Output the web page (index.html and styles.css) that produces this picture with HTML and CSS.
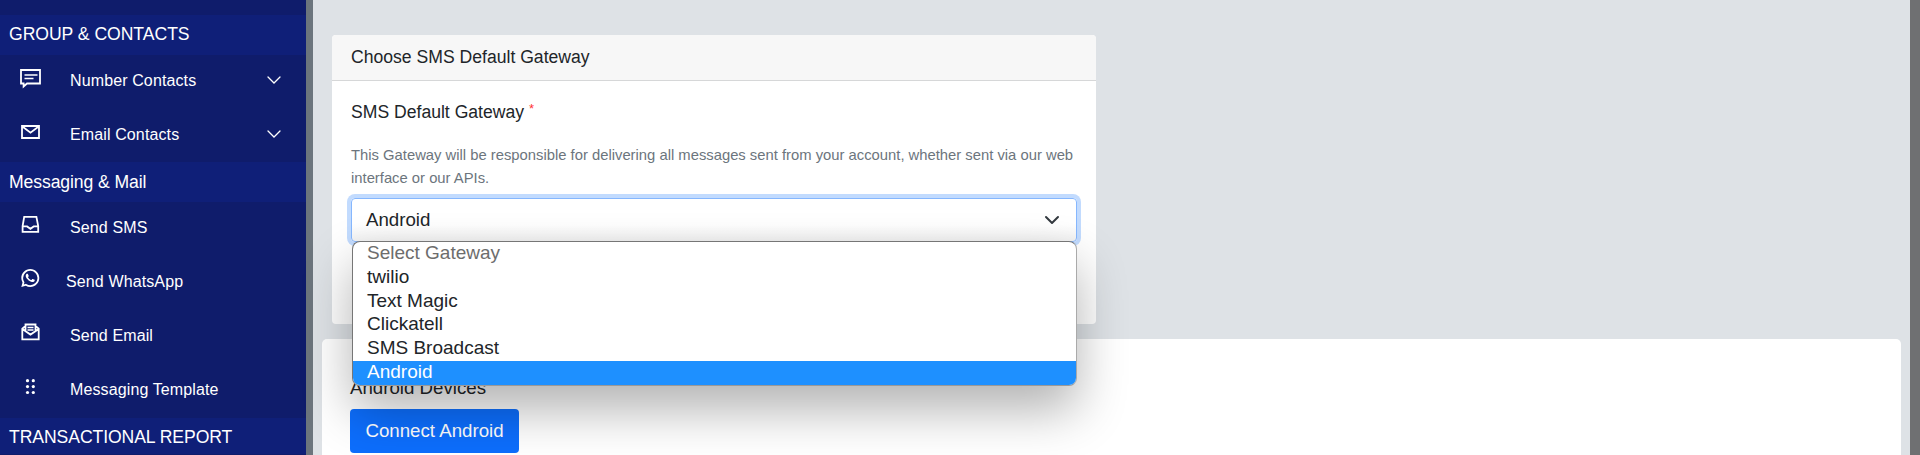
FILE: index.html
```html
<!DOCTYPE html>
<html lang="en">
<head>
<meta charset="utf-8">
<title>SMS Gateway</title>
<link rel="stylesheet" href="styles.css">
</head>
<body>
<div class="app">
  <nav class="sidebar">
    <h2 class="group">GROUP &amp; CONTACTS</h2>
    <ul class="menu menu-top">
      <li class="item">
        <svg class="icon" viewBox="0 0 24 24"><path d="M3 5h19v13.500H9l-3.400 3v-3H3z" fill="none" stroke="#fff" stroke-width="1.8"/><path d="M6.5 10h13M6.5 13.500h9" stroke="#fff" stroke-width="1.7"/></svg>
        <span class="label">Number Contacts</span>
        <svg class="caret" viewBox="0 0 16 16"><path d="M2 5l6 6 6-6" fill="none" stroke="#fff" stroke-width="1.300" stroke-linecap="round"/></svg>
      </li>
      <li class="item">
        <svg class="icon" viewBox="0 0 24 24"><path d="M4 7h17v12H4zM4 7.3l8.5 6.4L21 7.3" fill="none" stroke="#fff" stroke-width="1.8"/></svg>
        <span class="label">Email Contacts</span>
        <svg class="caret" viewBox="0 0 16 16"><path d="M2 5l6 6 6-6" fill="none" stroke="#fff" stroke-width="1.300" stroke-linecap="round"/></svg>
      </li>
    </ul>
    <h2 class="group group-mid">Messaging &amp; Mail</h2>
    <ul class="menu">
      <li class="item">
        <svg class="icon" viewBox="0 0 24 24"><path d="M6.2 4.9h12.2l1.8 9.3v5.7H4.6v-5.7zM4.6 14.4h4.5l3.3 2.4 3.3-2.4h4.5" fill="none" stroke="#fff" stroke-width="1.8"/></svg>
        <span class="label">Send SMS</span>
      </li>
      <li class="item item-near">
        <svg class="icon" viewBox="0 0 24 24"><g transform="translate(1.5 1.2) scale(.9)"><path fill="#fff" d="M7.253 18.494l.724.423A7.953 7.953 0 0 0 12 20a8 8 0 1 0-8-8c0 1.436.377 2.813 1.084 4.024l.422.724-.653 2.401 2.4-.655zM2.004 22l1.352-4.968A9.954 9.954 0 0 1 2 12C2 6.477 6.477 2 12 2s10 4.477 10 10-4.477 10-10 10a9.954 9.954 0 0 1-5.03-1.355L2.004 22zM8.391 7.308c.134-.01.269-.01.403-.004.054.004.108.01.162.016.159.018.334.115.393.249.298.676.588 1.357.868 2.04.062.152.025.347-.093.537a4.38 4.38 0 0 1-.263.372c-.113.145-.356.411-.356.411s-.099.118-.061.265c.014.056.06.137.102.205l.059.095c.256.427.6.86 1.02 1.268.12.116.237.235.363.346.468.413.998.75 1.57 1l.005.002c.085.037.128.057.252.11.062.026.126.049.191.066a.35.35 0 0 0 .367-.13c.724-.877.79-.934.796-.934v.002a.482.482 0 0 1 .378-.127c.06.004.121.015.177.04.531.243 1.4.622 1.4.622l.582.261c.098.047.187.158.19.265.004.067.01.175-.013.373-.032.259-.11.57-.188.733a1.155 1.155 0 0 1-.21.302 2.378 2.378 0 0 1-.33.288 3.71 3.71 0 0 1-.125.09 5.024 5.024 0 0 1-.383.22 1.99 1.99 0 0 1-.833.23c-.185.01-.37.024-.556.014-.008 0-.568-.087-.568-.087a9.448 9.448 0 0 1-3.84-2.046c-.226-.199-.435-.413-.649-.626-.89-.885-1.562-1.84-1.97-2.742A3.47 3.47 0 0 1 6.9 9.62a2.729 2.729 0 0 1 .564-1.68c.073-.094.142-.192.261-.305.127-.12.207-.184.294-.228a.961.961 0 0 1 .371-.1z"/></g></svg>
        <span class="label">Send WhatsApp</span>
      </li>
      <li class="item">
        <svg class="icon" viewBox="0 0 24 24"><path d="M7.5 6L4.3 8.6v10.7h16.4V8.6L17.5 6M4.3 9l8.2 5.6L20.7 9M7.5 11V4.5h10V11" fill="none" stroke="#fff" stroke-width="1.8"/><path d="M9.5 7.5h6M9.5 10h6" stroke="#fff" stroke-width="1.3"/></svg>
        <span class="label">Send Email</span>
      </li>
      <li class="item">
        <svg class="icon" viewBox="0 0 24 24" fill="#fff"><circle cx="9.5" cy="6.7" r="1.6"/><circle cx="15.3" cy="6.7" r="1.6"/><circle cx="9.5" cy="12.6" r="1.6"/><circle cx="15.3" cy="12.6" r="1.6"/><circle cx="9.5" cy="18.5" r="1.6"/><circle cx="15.3" cy="18.5" r="1.6"/></svg>
        <span class="label">Messaging Template</span>
      </li>
    </ul>
    <h2 class="group group-last">TRANSACTIONAL REPORT</h2>
  </nav>
  <div class="divider"></div>
  <main class="content">
    <section class="card gateway">
      <header class="card-header">Choose SMS Default Gateway</header>
      <div class="card-body">
        <div class="field-label">SMS Default Gateway <span class="required">*</span></div>
        <p class="hint">This Gateway will be responsible for delivering all messages sent from your account, whether sent via our web interface or our APIs.</p>
        <div class="select">
          <span>Android</span>
          <svg class="arrow" viewBox="0 0 16 16"><path d="M2 5l6 6 6-6" fill="none" stroke="#343a40" stroke-width="2" stroke-linecap="round" stroke-linejoin="round"/></svg>
          <ul class="options">
            <li class="option muted">Select Gateway</li>
            <li class="option">twilio</li>
            <li class="option">Text Magic</li>
            <li class="option">Clickatell</li>
            <li class="option">SMS Broadcast</li>
            <li class="option active">Android</li>
          </ul>
        </div>
      </div>
    </section>
    <section class="card devices">
      <div class="devices-title">Android Devices</div>
      <button class="connect">Connect Android</button>
    </section>
  </main>
  <div class="scrollbar"></div>
</div>
</body>
</html>
```
FILE: styles.css
```css
* { box-sizing: border-box; }
body { margin: 0; overflow: hidden; font-family: "Liberation Sans", Arial, sans-serif; color: #212529; }
ul, h2, p { margin: 0; padding: 0; list-style: none; }
.app { display: flex; width: 100%; height: 455px; overflow: hidden; }

.sidebar { flex: 0 0 306px; padding-top: 15px; background: #0f1c6b; color: #fff; }
.group { height: 40px; padding-left: 9px; background: #0f1f78; font-size: 17.6px; font-weight: 400; line-height: 38px; letter-spacing: -.04px; }
.group-mid { line-height: 40px; letter-spacing: -.1px; }
.group-last { height: 36px; letter-spacing: -.08px; }
.menu { height: 216px; }
.menu-top { height: 107px; }
.item { display: flex; align-items: center; height: 54px; padding: 0 24px 2px 18px; font-size: 16px; letter-spacing: .12px; }
.icon { flex: none; width: 24px; height: 24px; margin: -8px 28px 0 0; }
.item-near .icon { margin-right: 24px; }
.label { flex: 1; line-height: 24px; white-space: nowrap; }
.caret { width: 16px; height: 16px; margin-top: -2px; }

.divider { flex: 0 0 7px; background: #6c757d; }
.content { flex: 1; padding: 35px 9px 0; background: #dee2e6; }
.scrollbar { flex: 0 0 10px; background: #6f7072; }

.card { background: #fff; border-radius: 5px; }
.gateway { width: 764px; height: 289px; margin-left: 10px; border-radius: 4px; }
.card-header { height: 46px; padding-left: 19px; background: #f7f7f7; border-bottom: 1px solid #d6d7d8; border-radius: 4px 4px 0 0; font-size: 17.6px; line-height: 44px; }
.card-body { padding: 17px 19px 0; }
.field-label { height: 46px; font-size: 17.6px; line-height: 28px; }
.required { color: #f33; font-size: 13px; vertical-align: 5px; line-height: 1; }
.hint { height: 54px; color: #6c757d; font-size: 14.8px; line-height: 23px; }
.select { position: relative; display: flex; align-items: center; justify-content: space-between; height: 44px; padding: 0 16px 0 14px; border: 1px solid #86b7fe; border-radius: 4px; background: linear-gradient(#fff 60%, #f2f2f2); box-shadow: 0 0 0 4px #c2dbfe; font-size: 18.7px; }
.arrow { width: 16px; height: 16px; }
.options { position: absolute; z-index: 2; top: 42px; left: 0; width: 725px; height: 145px; border: 1px solid #767676; border-right-color: #aaa; border-bottom-color: #999; border-radius: 8px; background: #fff; box-shadow: 0 24px 50px rgba(0, 0, 0, .3); font-size: 19px; }
.option { height: 23.8px; padding-left: 14px; line-height: 22px; }
.muted { color: #6d6d6d; }
.active { height: 24px; background: #1e90ff; color: #fff; border-radius: 0 0 7px 7px; }

.devices { height: 130px; margin-top: 15px; padding: 36px 28px 0; }
.devices-title { height: 34px; font-size: 18.7px; line-height: 26px; }
.connect { display: block; width: 169px; height: 44px; padding: 0 0 1px; border: 0; border-radius: 4px; background: #0d6efd; color: #fff; font: 18.7px "Liberation Sans", Arial, sans-serif; white-space: nowrap; }
```
